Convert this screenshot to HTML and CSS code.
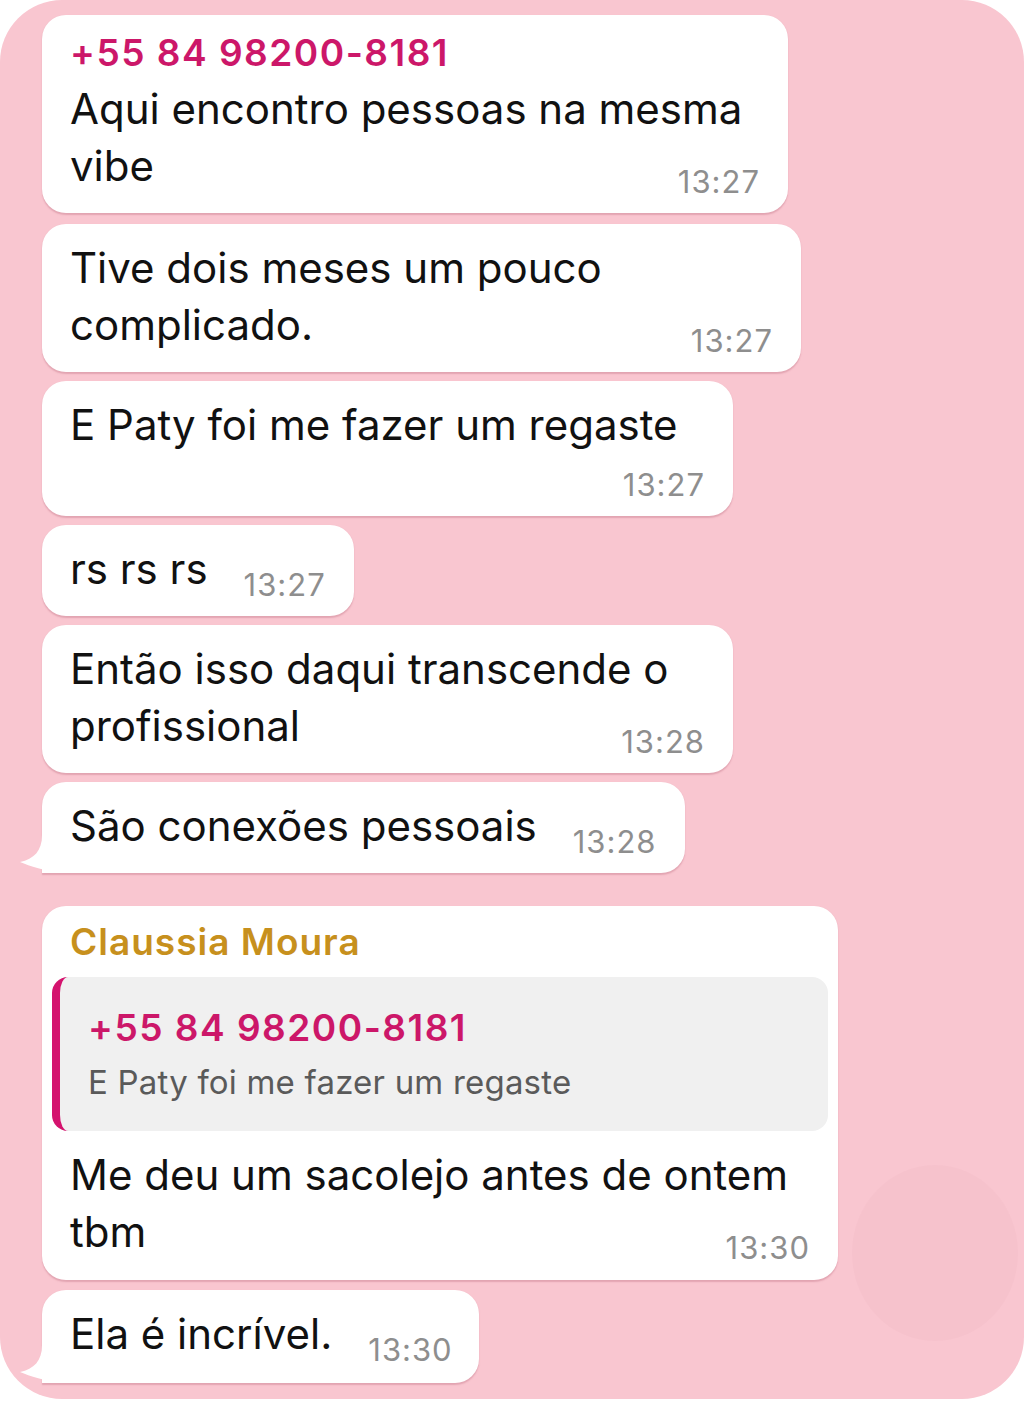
FILE: index.html
```html
<!DOCTYPE html>
<html lang="pt-BR">
<head>
<meta charset="utf-8">
<title>Chat</title>
<link rel="stylesheet" href="styles.css">
</head>
<body>
<div class="screen">
  <div class="bubble w-1">
    <div class="sender sender-pink">+55 84 98200-8181</div>
    <div class="body">Aqui encontro pessoas na mesma vibe<span class="time">13:27</span></div>
  </div>
  <div class="bubble w-2">
    <div class="body">Tive dois meses um pouco complicado.<span class="time">13:27</span></div>
  </div>
  <div class="bubble w-3">
    <div class="body">E Paty foi me fazer um regaste<span class="time time-wrapped">13:27</span></div>
  </div>
  <div class="bubble">
    <div class="body">rs rs rs<span class="time">13:27</span></div>
  </div>
  <div class="bubble w-5">
    <div class="body">Então isso daqui transcende o profissional<span class="time">13:28</span></div>
  </div>
  <div class="bubble tailed">
    <div class="body">São conexões pessoais<span class="time">13:28</span></div>
    <svg class="tail" width="46" height="50" viewBox="0 0 46 50"><path d="M24 0 L24 12 C24 28 16 36 2 39 C12 43 26 48 46 50 L46 0 Z" fill="#ffffff"/></svg>
  </div>
  <div class="bubble w-7 group-start">
    <div class="sender sender-gold">Claussia Moura</div>
    <div class="quote">
      <div class="quote-name">+55 84 98200-8181</div>
      <div class="quote-text">E Paty foi me fazer um regaste</div>
    </div>
    <div class="body">Me deu um sacolejo antes de ontem tbm<span class="time">13:30</span></div>
  </div>
  <div class="bubble tailed last">
    <div class="body">Ela é incrível.<span class="time">13:30</span></div>
    <svg class="tail" width="46" height="50" viewBox="0 0 46 50"><path d="M24 0 L24 12 C24 28 16 36 2 39 C12 43 26 48 46 50 L46 0 Z" fill="#ffffff"/></svg>
  </div>
  <div class="ghost-button"></div>
</div>
</body>
</html>
```

FILE: styles.css
```css
html, body {
  margin: 0;
  padding: 0;
  background: #ffffff;
}

.screen {
  position: relative;
  box-sizing: border-box;
  width: 1024px;
  height: 1399px;
  border-radius: 62px;
  background: #f9c6d0;
  padding: 15px 0 0 42px;
  display: flex;
  flex-direction: column;
  align-items: flex-start;
  gap: 9px;
  overflow: hidden;
  font-family: Inter, "Liberation Sans", Arial, sans-serif;
}

.bubble {
  position: relative;
  box-sizing: border-box;
  display: flow-root;
  background: #ffffff;
  border-radius: 24px;
  padding: 15px 28px 19px 28px;
  box-shadow: 0 1.5px 1.5px rgba(170, 80, 100, 0.28);
  color: #111111;
}

.w-1 { width: 746px; padding-top: 12px; }
.w-2 { width: 759px; margin-top: 2px; }
.w-3 { width: 691px; }
.w-5 { width: 691px; }
.w-7 { width: 796px; padding-left: 10px; padding-right: 10px; padding-top: 12px; padding-bottom: 20px; }
.last { margin-top: 1px; padding-bottom: 21px; padding-right: 26px; }

.group-start { margin-top: 24px; }

.sender {
  font-size: 37px;
  line-height: 48px;
  font-weight: 600;
  letter-spacing: 1.5px;
  margin-bottom: 5px;
}

.sender-pink { color: #cc1769; padding-top: 2px; margin-bottom: 3px; }
.sender-gold { color: #c7901d; padding-left: 18px; margin-bottom: 11px; letter-spacing: 1px; }

.body {
  font-size: 42px;
  line-height: 57px;
  font-weight: 400;
}

.w-7 .body { padding: 15px 18px 0 18px; }

.time {
  float: right;
  font-size: 31px;
  line-height: 40px;
  letter-spacing: 1px;
  color: #8e8e8e;
  margin: 25px 0 -8px 36px;
}

.time-wrapped { margin-top: 12px; }

.quote {
  box-sizing: border-box;
  background: #f0f0f0;
  border-left: 8px solid #d4136e;
  border-radius: 16px;
  padding: 27px 20px 27px 28px;
}

.quote-name {
  font-size: 37px;
  line-height: 48px;
  font-weight: 600;
  letter-spacing: 1.5px;
  color: #cc1769;
  margin-bottom: 8px;
}

.quote-text {
  font-size: 33px;
  line-height: 44px;
  color: #5a5a5a;
  letter-spacing: 0.2px;
}

.tailed {
  border-bottom-left-radius: 0;
}

.tail {
  position: absolute;
  left: -24px;
  bottom: 0;
  display: block;
}

.ghost-button {
  position: absolute;
  right: 6px;
  top: 1165px;
  width: 166px;
  height: 176px;
  border-radius: 50%;
  background: rgba(200, 140, 160, 0.06);
}
```
